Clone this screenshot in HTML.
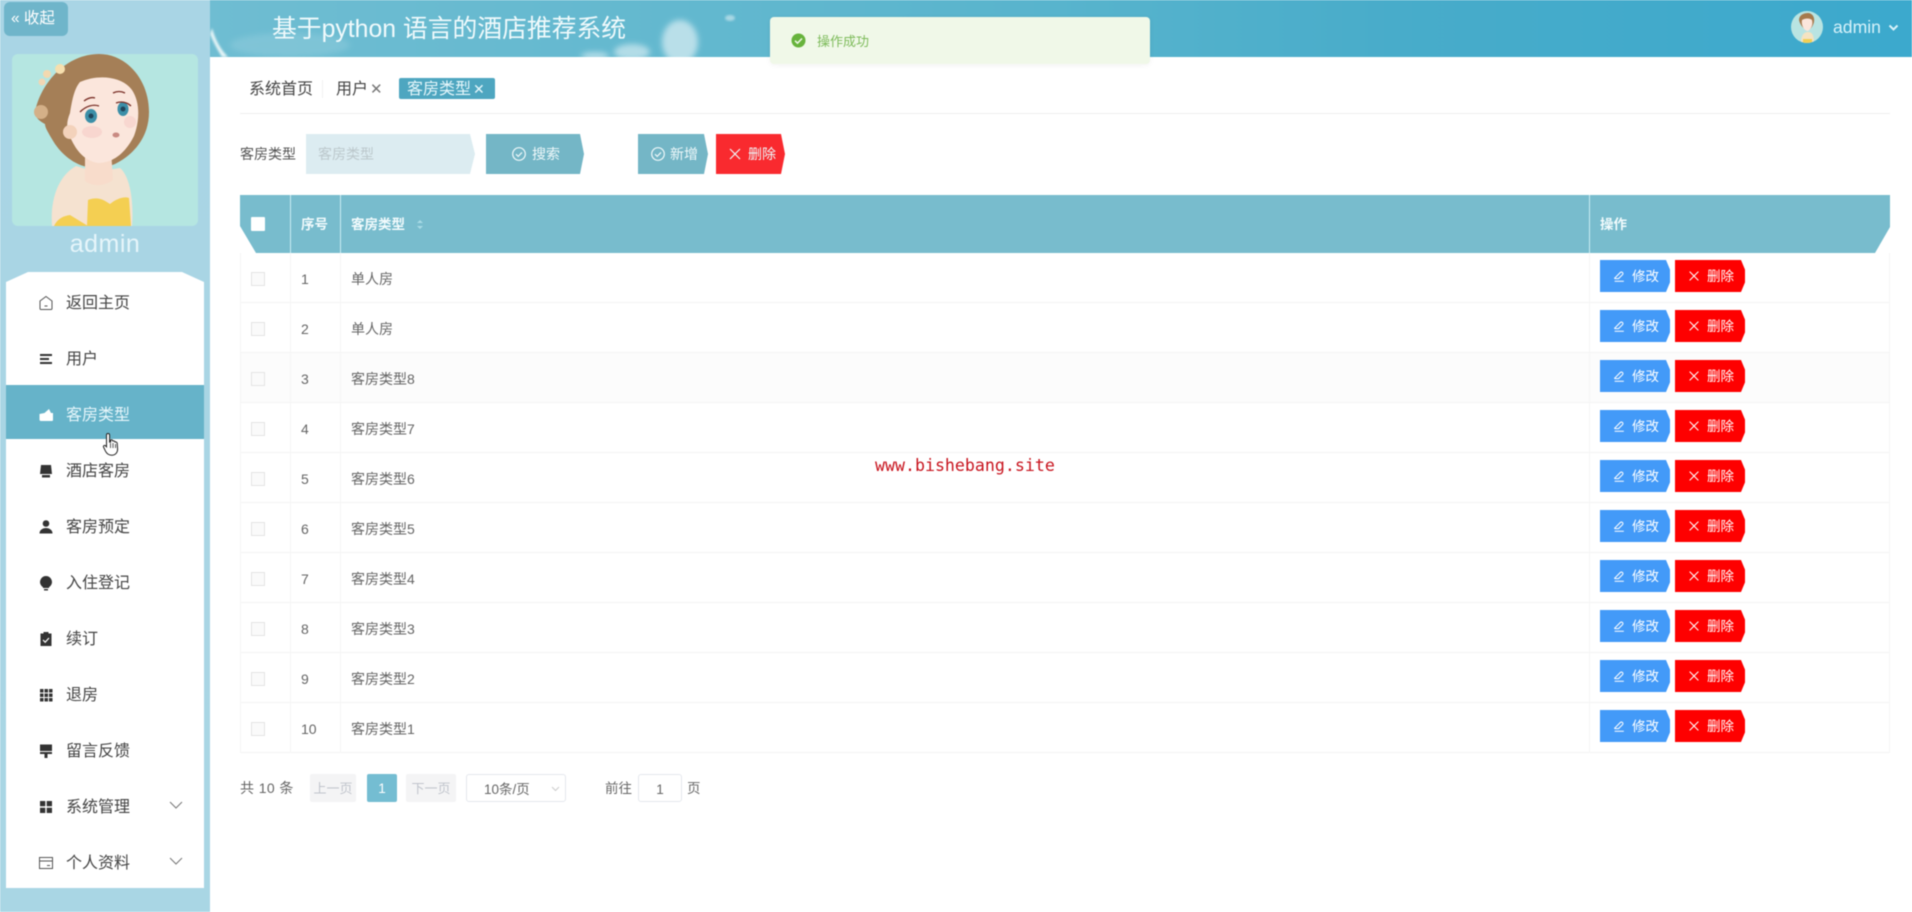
<!DOCTYPE html>
<html lang="zh">
<head>
<meta charset="utf-8">
<title>基于python 语言的酒店推荐系统</title>
<style>
*{box-sizing:border-box;margin:0;padding:0}
html,body{width:1912px;height:912px;overflow:hidden;background:#fff}
body{font-family:"Liberation Sans","Noto Sans CJK SC",sans-serif;color:#666;font-size:14px}
#w{position:absolute;left:0;top:0;width:1912px;height:912px;overflow:hidden;filter:blur(.5px)}
.a{position:absolute;white-space:nowrap}
#side{left:0;top:0;width:210px;height:912px;background:linear-gradient(180deg,#a9d5e5 0,#a9d6e4 100%)}
#collapse{left:4px;top:2px;width:64px;height:34px;background:#6fb5ca;border-radius:6px;color:#fff;font-size:15.5px;line-height:34px;padding-left:7px}
#ava{left:12px;top:54px;width:186px;height:172px;background:#b5e6e1;border-radius:6px;overflow:hidden}
#uname{left:0;width:210px;top:228px;text-align:center;color:#e6f5fa;font-size:25px;line-height:32px;letter-spacing:.5px}
#menu{left:6px;top:272px;width:198px;height:616px;background:#fff;clip-path:polygon(0 10px,22px 0,176px 0,198px 10px,198px 100%,0 100%)}
.mi{position:absolute;left:0;width:198px;height:56px;line-height:60px;font-size:16px;color:#444;padding-left:60px}
.mi svg.ic{position:absolute;left:32px;top:21px;width:16px;height:16px;fill:#333}
.mi.on{background:#66b3c9;color:#e6f6fb;height:54px;line-height:62px}
.mi.on svg.ic{fill:#fff;top:22px}
.chev{position:absolute;left:163px;top:23px;width:14px;height:9px;fill:none;stroke:#777;stroke-width:1}
#top{left:210px;top:0;width:1702px;height:57px;background:linear-gradient(90deg,#6fbdd2 0,#62b8cf 30%,#58b4cd 50%,#48acca 70%,#3ca9cd 100%);overflow:hidden}
#title{left:272px;top:14px;color:#f0fafc;font-size:24.8px;line-height:32px}
#toast{left:770px;top:17px;width:380px;height:47px;background:#f0f8e8;border-radius:4px;box-shadow:0 1px 6px rgba(0,0,0,.06);color:#7dbb5a;font-size:13px;line-height:49px;padding-left:47px}
#uav{left:1791px;top:11px;width:32px;height:32px;border-radius:50%;background:#b9e4e2;overflow:hidden}
#utxt{left:1833px;top:14px;color:#d6f2fa;font-size:17.6px;line-height:26px}
.tab{font-size:16px;line-height:22px;color:#444;top:79px}
#active{left:399px;top:78px;width:96px;height:21px;background:#4ea6c0;border-radius:2px;color:#e6f7fb;font-size:16px;line-height:23px;padding-left:8px}
#hr{left:240px;top:113px;width:1650px;height:1px;background:#eee}
#inp{left:306px;top:134px;width:169px;height:40px;background:#dcecf1;clip-path:polygon(0 0,calc(100% - 5px) 0,100% 50%,calc(100% - 5px) 100%,0 100%);color:#bcc8cc;font-size:14px;line-height:40px;padding-left:12px}
.tb{top:134px;height:40px;line-height:40px;color:#eef8fa;font-size:14px;background:#74b6c6;clip-path:polygon(0 0,calc(100% - 4px) 0,100% 50%,calc(100% - 4px) 100%,0 100%)}
.tb svg,.rb svg{position:absolute;fill:none;stroke:currentColor;stroke-width:1.2}
#head{left:240px;top:195px;width:1650px;height:58px;background:#78bccd;clip-path:polygon(0 0,100% 0,100% 32px,1635px 100%,16px 100%,0 31px);color:#f2fbfd;font-weight:bold;font-size:13.5px;line-height:60px}
.vl{position:absolute;top:0;width:1px;height:58px;background:#c9ecf3}
#head span{position:absolute;top:0}
.r{position:absolute;left:240px;width:1650px;height:50px;border-bottom:1px solid #f4f4f4;font-size:14px;color:#666;line-height:50px}
.r.s{background:#fcfcfc}
.r i.v{position:absolute;top:0;width:1px;height:50px;background:#f5f5f5}
.cb{position:absolute;left:11px;top:19px;width:14px;height:14px;border:1px solid #e4e4e4;background:#fafafa}
.n{position:absolute;left:61px;top:1px}
.t{position:absolute;left:111px;top:1px}
.rb{position:absolute;top:7px;height:32px;color:#fff;font-size:13.5px;line-height:34px;clip-path:polygon(0 0,calc(100% - 4px) 0,100% 30%,100% 70%,calc(100% - 4px) 100%,0 100%)}
.e{left:1360px;width:70px;background:#439af8;padding-left:32px}
.d{left:1435px;width:70px;background:#fe0000;padding-left:32px}
.pg{top:774px;height:28px;line-height:29px;font-size:13.5px}
.dis{background:#f4f4f5;color:#c0c4cc;text-align:center;font-size:13px;border-radius:2px}
.box{border:1px solid #e4e7ed;border-radius:3px;color:#666;background:#fff}
</style>
</head>
<body>
<svg width="0" height="0" style="position:absolute">
<defs>
<symbol id="ok" viewBox="0 0 16 16"><circle cx="8" cy="8" r="6.3"/><path d="M5 8.2l2.2 2.2L11 6.4"/></symbol>
<symbol id="x" viewBox="0 0 16 16"><path d="M3 3l10 10M13 3L3 13"/></symbol>
<symbol id="ed" viewBox="0 0 16 16"><path d="M3 10.5L9.5 4c1-1 2.8-.4 3 1 .1.6-.1 1.100-.5 1.500L7.500 11H3.500zM3 14h10.500"/></symbol>
</defs>
</svg>
<div id="w">

<div id="side" class="a"></div>
<div id="collapse" class="a">« 收起</div>
<div id="ava" class="a">
<svg width="186" height="172" viewBox="12 54 186 172">
<path d="M52 226c-2-26 6-50 24-60l20 6 24-4c10 8 14 34 12 58z" fill="#f5e2d0"/>
<path d="M54 226c4-8 10-10 16-11l18 11zM87 226l1-26c10-4 16 0 22 4 6-5 14-8 19-6l2 28z" fill="#f4cf52"/>
<path d="M35 112c6-30 32-58 64-58 28 0 50 26 50 58 0 24-14 42-34 52-24 10-46 0-60-20-6-10-10-16-10-20-4-2-10-6-10-12z" fill="#a57f57"/>
<circle cx="41" cy="112" r="7" fill="#d4b088"/>
<path d="M85 150h26l2 30c-8 6-20 7-28 1z" fill="#f8dccb"/>
<path d="M80 82c18-8 42-6 52 8 8 12 8 30 2 46-8 16-20 27-36 27-12-2-20-10-26-22-6-12-6-18-2-28 2-12 4-24 10-31z" fill="#fbe6dc"/>
<circle cx="70" cy="132" r="7" fill="#f3d2bb"/>
<ellipse cx="91" cy="116" rx="6" ry="7" fill="#3c8fa8"/><ellipse cx="123" cy="109" rx="5.500" ry="7" fill="#3c8fa8"/>
<circle cx="91" cy="116" r="2.500" fill="#20455a"/><circle cx="123" cy="109" r="2.500" fill="#20455a"/>
<path d="M80 112c6-6 13-8 19-6M116 103c5-2 11-1 15 3M84 101c4-3 8-4 11-3M113 93c4-2 8-2 12 0" fill="none" stroke="#7a3028" stroke-width="1.300"/>
<ellipse cx="92" cy="132" rx="10" ry="6" fill="#f6c8c4" opacity=".55"/><ellipse cx="130" cy="122" rx="6" ry="6" fill="#f6c8c4" opacity=".5"/>
<ellipse cx="116" cy="135" rx="3.500" ry="2.500" fill="#c98a82"/>
<circle cx="60" cy="69" r="5" fill="#f6dfae"/><circle cx="47" cy="74" r="4" fill="#f3d9b0"/><circle cx="42" cy="82" r="3.500" fill="#f1d6b4"/>
</svg>
</div>
<div id="uname" class="a">admin</div>

<div id="menu" class="a">
<div class="mi" style="top:2px"><svg class="ic" viewBox="0 0 16 16" style="fill:none;stroke:#555;stroke-width:1"><path d="M8 1.500L14 6v7.500a1 1 0 0 1-1 1H3a1 1 0 0 1-1-1V6zM6.500 11h3"/></svg>返回主页</div>
<div class="mi" style="top:58px"><svg class="ic" viewBox="0 0 16 16"><path d="M2 3h12v2H2zM2 7h9v2H2zM2 11h12v2H2z"/></svg>用户</div>
<div class="mi on" style="top:113px"><svg class="ic" viewBox="0 0 16 16"><path d="M1.500 7l5-1L11 2l2 4h2v7a1 1 0 0 1-1 1H3a1.500 1.500 0 0 1-1.500-1.500z"/></svg>客房类型</div>
<div class="mi" style="top:170px"><svg class="ic" viewBox="0 0 16 16"><path d="M3 2h10l1 9H2zM4 12h8v2.500H4z"/></svg>酒店客房</div>
<div class="mi" style="top:226px"><svg class="ic" viewBox="0 0 16 16"><circle cx="8" cy="4.500" r="3.300"/><path d="M1.500 14.500c0-3.500 3-5.500 6.500-5.500s6.500 2 6.500 5.500z"/></svg>客房预定</div>
<div class="mi" style="top:282px"><svg class="ic" viewBox="0 0 16 16"><path d="M8 1a6 6 0 0 1 3 11.200V13H5v-.8A6 6 0 0 1 8 1zM6 14h4v1.500H6z"/></svg>入住登记</div>
<div class="mi" style="top:338px"><svg class="ic" viewBox="0 0 16 16"><path d="M2.500 2.500H5.500V1h5v1.500h3V15h-11z"/><path d="M5 9l2.200 2.200L11 7" fill="none" stroke="#fff" stroke-width="1.200"/></svg>续订</div>
<div class="mi" style="top:394px"><svg class="ic" viewBox="0 0 16 16"><path d="M2 2h3.500v3.500H2zM6.500 2H10v3.500H6.500zM11 2h3.500v3.500H11zM2 6.500h3.500V10H2zM6.500 6.500H10V10H6.500zM11 6.500h3.500V10H11zM2 11h3.500v3.500H2zM6.500 11H10v3.500H6.500zM11 11h3.500v3.500H11z"/></svg>退房</div>
<div class="mi" style="top:450px"><svg class="ic" viewBox="0 0 16 16"><path d="M2 1.500h12V8H2zM2 9h12v2H9.500v4h-3v-4H2z"/></svg>留言反馈</div>
<div class="mi" style="top:506px"><svg class="ic" viewBox="0 0 16 16"><path d="M2 2h5.300v5.300H2zM8.700 2H14v5.300H8.700zM2 8.700h5.300V14H2zM8.700 8.700H14V14H8.700z"/></svg>系统管理<svg class="chev" viewBox="0 0 14 9"><path d="M1 1l6 6 6-6"/></svg></div>
<div class="mi" style="top:562px"><svg class="ic" viewBox="0 0 16 16" style="fill:none;stroke:#555;stroke-width:1"><path d="M1.500 2.500h13v11h-13zM1.500 6h13M9 10.500h3"/></svg>个人资料<svg class="chev" viewBox="0 0 14 9"><path d="M1 1l6 6 6-6"/></svg></div>
</div>

<svg class="a" style="left:102px;top:432px" width="20" height="25" viewBox="0 0 20 25"><path d="M6 1.500c1 0 1.600.7 1.600 1.700v7l1-.2V8c1.400-.6 2 .2 2.200 1 1.300-.5 2 .2 2.200 1 1.200-.4 2 .3 2.200 1.200l.4 6c0 3-2 6-5.600 6-3.500 0-5-1.500-6.500-4L1.500 15c-.5-1 .8-2.200 2-1.200l1 1V3.200c0-1 .6-1.700 1.500-1.700z" fill="#fff" stroke="#222" stroke-width="1"/><path d="M8.500 11v5M11 11v5M13.500 12v4" stroke="#333" stroke-width=".8"/></svg>

<div id="top" class="a">
<svg width="1702" height="57" style="position:absolute;left:0;top:0">
<defs><filter id="b" x="-50%" y="-50%" width="200%" height="200%"><feGaussianBlur stdDeviation="3"/></filter><filter id="b2"><feGaussianBlur stdDeviation="1"/></filter></defs>
<path d="M2 28Q7 46 18 57L12 57Q4 44 0 34z" fill="#e8f6f8" filter="url(#b2)"/>
<g fill="#fff" filter="url(#b)">
<ellipse cx="385" cy="56" rx="14" ry="4" opacity=".5"/><ellipse cx="422" cy="52" rx="18" ry="8" opacity=".5"/><ellipse cx="470" cy="42" rx="18" ry="22" opacity=".55"/>
</g>
<ellipse cx="520" cy="18" rx="5" ry="3" fill="#fff" opacity=".45" filter="url(#b2)"/>
<g fill="#fff" opacity=".12" filter="url(#b)"><ellipse cx="80" cy="45" rx="60" ry="12"/></g>
</svg>
</div>
<div id="title" class="a">基于python 语言的酒店推荐系统</div>
<div id="uav" class="a">
<svg width="32" height="32" viewBox="0 0 32 32"><path d="M8 9c0-5 5-7 9-7s7 4 6 9c-1 4-3 7-6 8-4 0-8-5-9-10z" fill="#a67a4d"/><path d="M11 9c3-2 8-2 10 0 1 4 0 8-4 11-4 0-7-6-6-11z" fill="#fbe6dc"/><path d="M10 32c0-8 3-11 7-11s6 3 6 11z" fill="#f4e3c2"/><path d="M12 32v-4h9v4z" fill="#f2cf55"/></svg>
</div>
<div id="utxt" class="a">admin</div>
<svg class="a" style="left:1888px;top:24px" width="11" height="8" viewBox="0 0 11 8"><path d="M1.500 1.500l4 4 4-4" fill="none" stroke="#d9f3fa" stroke-width="2"/></svg>

<div id="toast" class="a">操作成功
<svg style="position:absolute;left:21px;top:16px" width="15" height="15" viewBox="0 0 15 15"><circle cx="7.500" cy="7.500" r="7" fill="#67b33c"/><path d="M4 7.700l2.500 2.500L11 5.500" fill="none" stroke="#f0f8e8" stroke-width="1.500"/></svg>
</div>

<div class="a tab" style="left:249px">系统首页</div>
<div class="a" style="left:322px;top:80px;width:1px;height:18px;background:#f2f2f2"></div>
<div class="a tab" style="left:336px">用户<span style="font-size:15px;color:#777;margin-left:2px">✕</span></div>
<div id="active" class="a">客房类型<span style="font-size:14px;margin-left:2px">✕</span></div>
<div id="hr" class="a"></div>

<div class="a" style="left:240px;top:144px;font-size:14px;line-height:20px;color:#555">客房类型</div>
<div id="inp" class="a">客房类型</div>
<div class="a tb" style="left:486px;width:98px;padding-left:46px"><svg style="left:25px;top:12px" width="16" height="16"><use href="#ok"/></svg>搜索</div>
<div class="a tb" style="left:638px;width:70px;padding-left:32px"><svg style="left:12px;top:12px" width="16" height="16"><use href="#ok"/></svg>新增</div>
<div class="a tb" style="left:716px;width:69px;padding-left:32px;background:#f92a2f"><svg style="left:11px;top:12px" width="16" height="16" ><use href="#x"/></svg>删除</div>

<div id="head" class="a">
<i class="vl" style="left:50px"></i><i class="vl" style="left:100px"></i><i class="vl" style="left:1349px"></i>
<i style="position:absolute;left:11px;top:22px;width:14px;height:14px;background:#fff;border-radius:1px"></i>
<span style="left:61px">序号</span>
<span style="left:111px">客房类型</span>
<svg style="position:absolute;left:176px;top:24px" width="8" height="11" viewBox="0 0 8 11"><path d="M1 4l3-3 3 3zM1 7l3 3 3-3z" fill="#a9dbe6"/></svg>
<span style="left:1360px">操作</span>
</div>

<div class="r" style="top:253px"><i class="v" style="left:0"></i><i class="v" style="left:50px"></i><i class="v" style="left:100px"></i><i class="v" style="left:1349px"></i><i class="v" style="left:1649px"></i><b class="cb"></b><span class="n">1</span><span class="t">单人房</span><div class="rb e"><svg style="left:12px;top:9px" width="14" height="14"><use href="#ed"/></svg>修改</div><div class="rb d"><svg style="left:12px;top:9px" width="14" height="14"><use href="#x"/></svg>删除</div></div>
<div class="r" style="top:303px"><i class="v" style="left:0"></i><i class="v" style="left:50px"></i><i class="v" style="left:100px"></i><i class="v" style="left:1349px"></i><i class="v" style="left:1649px"></i><b class="cb"></b><span class="n">2</span><span class="t">单人房</span><div class="rb e"><svg style="left:12px;top:9px" width="14" height="14"><use href="#ed"/></svg>修改</div><div class="rb d"><svg style="left:12px;top:9px" width="14" height="14"><use href="#x"/></svg>删除</div></div>
<div class="r s" style="top:353px"><i class="v" style="left:0"></i><i class="v" style="left:50px"></i><i class="v" style="left:100px"></i><i class="v" style="left:1349px"></i><i class="v" style="left:1649px"></i><b class="cb"></b><span class="n">3</span><span class="t">客房类型8</span><div class="rb e"><svg style="left:12px;top:9px" width="14" height="14"><use href="#ed"/></svg>修改</div><div class="rb d"><svg style="left:12px;top:9px" width="14" height="14"><use href="#x"/></svg>删除</div></div>
<div class="r" style="top:403px"><i class="v" style="left:0"></i><i class="v" style="left:50px"></i><i class="v" style="left:100px"></i><i class="v" style="left:1349px"></i><i class="v" style="left:1649px"></i><b class="cb"></b><span class="n">4</span><span class="t">客房类型7</span><div class="rb e"><svg style="left:12px;top:9px" width="14" height="14"><use href="#ed"/></svg>修改</div><div class="rb d"><svg style="left:12px;top:9px" width="14" height="14"><use href="#x"/></svg>删除</div></div>
<div class="r" style="top:453px"><i class="v" style="left:0"></i><i class="v" style="left:50px"></i><i class="v" style="left:100px"></i><i class="v" style="left:1349px"></i><i class="v" style="left:1649px"></i><b class="cb"></b><span class="n">5</span><span class="t">客房类型6</span><div class="rb e"><svg style="left:12px;top:9px" width="14" height="14"><use href="#ed"/></svg>修改</div><div class="rb d"><svg style="left:12px;top:9px" width="14" height="14"><use href="#x"/></svg>删除</div></div>
<div class="r" style="top:503px"><i class="v" style="left:0"></i><i class="v" style="left:50px"></i><i class="v" style="left:100px"></i><i class="v" style="left:1349px"></i><i class="v" style="left:1649px"></i><b class="cb"></b><span class="n">6</span><span class="t">客房类型5</span><div class="rb e"><svg style="left:12px;top:9px" width="14" height="14"><use href="#ed"/></svg>修改</div><div class="rb d"><svg style="left:12px;top:9px" width="14" height="14"><use href="#x"/></svg>删除</div></div>
<div class="r" style="top:553px"><i class="v" style="left:0"></i><i class="v" style="left:50px"></i><i class="v" style="left:100px"></i><i class="v" style="left:1349px"></i><i class="v" style="left:1649px"></i><b class="cb"></b><span class="n">7</span><span class="t">客房类型4</span><div class="rb e"><svg style="left:12px;top:9px" width="14" height="14"><use href="#ed"/></svg>修改</div><div class="rb d"><svg style="left:12px;top:9px" width="14" height="14"><use href="#x"/></svg>删除</div></div>
<div class="r" style="top:603px"><i class="v" style="left:0"></i><i class="v" style="left:50px"></i><i class="v" style="left:100px"></i><i class="v" style="left:1349px"></i><i class="v" style="left:1649px"></i><b class="cb"></b><span class="n">8</span><span class="t">客房类型3</span><div class="rb e"><svg style="left:12px;top:9px" width="14" height="14"><use href="#ed"/></svg>修改</div><div class="rb d"><svg style="left:12px;top:9px" width="14" height="14"><use href="#x"/></svg>删除</div></div>
<div class="r" style="top:653px"><i class="v" style="left:0"></i><i class="v" style="left:50px"></i><i class="v" style="left:100px"></i><i class="v" style="left:1349px"></i><i class="v" style="left:1649px"></i><b class="cb"></b><span class="n">9</span><span class="t">客房类型2</span><div class="rb e"><svg style="left:12px;top:9px" width="14" height="14"><use href="#ed"/></svg>修改</div><div class="rb d"><svg style="left:12px;top:9px" width="14" height="14"><use href="#x"/></svg>删除</div></div>
<div class="r" style="top:703px"><i class="v" style="left:0"></i><i class="v" style="left:50px"></i><i class="v" style="left:100px"></i><i class="v" style="left:1349px"></i><i class="v" style="left:1649px"></i><b class="cb"></b><span class="n">10</span><span class="t">客房类型1</span><div class="rb e"><svg style="left:12px;top:9px" width="14" height="14"><use href="#ed"/></svg>修改</div><div class="rb d"><svg style="left:12px;top:9px" width="14" height="14"><use href="#x"/></svg>删除</div></div>

<div class="a" style="left:875px;top:455px;color:#c8141e;font-family:'DejaVu Sans Mono','Liberation Mono',monospace;font-size:16.6px;line-height:22px">www.bishebang.site</div>

<div class="a pg" style="left:240px;font-size:14px;letter-spacing:.4px">共 10 条</div>
<div class="a pg dis" style="left:310px;width:46px">上一页</div>
<div class="a pg" style="left:367px;width:30px;background:#74bdd2;color:#fff;text-align:center;border-radius:2px">1</div>
<div class="a pg dis" style="left:406px;width:50px">下一页</div>
<div class="a pg box" style="left:466px;width:100px;padding-left:17px">10条/页<svg style="position:absolute;left:84px;top:11px" width="9" height="6" viewBox="0 0 9 6"><path d="M1 1l3.500 3.500L8 1" fill="none" stroke="#ccc"/></svg></div>
<div class="a pg" style="left:605px">前往</div>
<div class="a pg box" style="left:638px;width:44px;text-align:center">1</div>
<div class="a pg" style="left:687px">页</div>

</div>
</body>
</html>
